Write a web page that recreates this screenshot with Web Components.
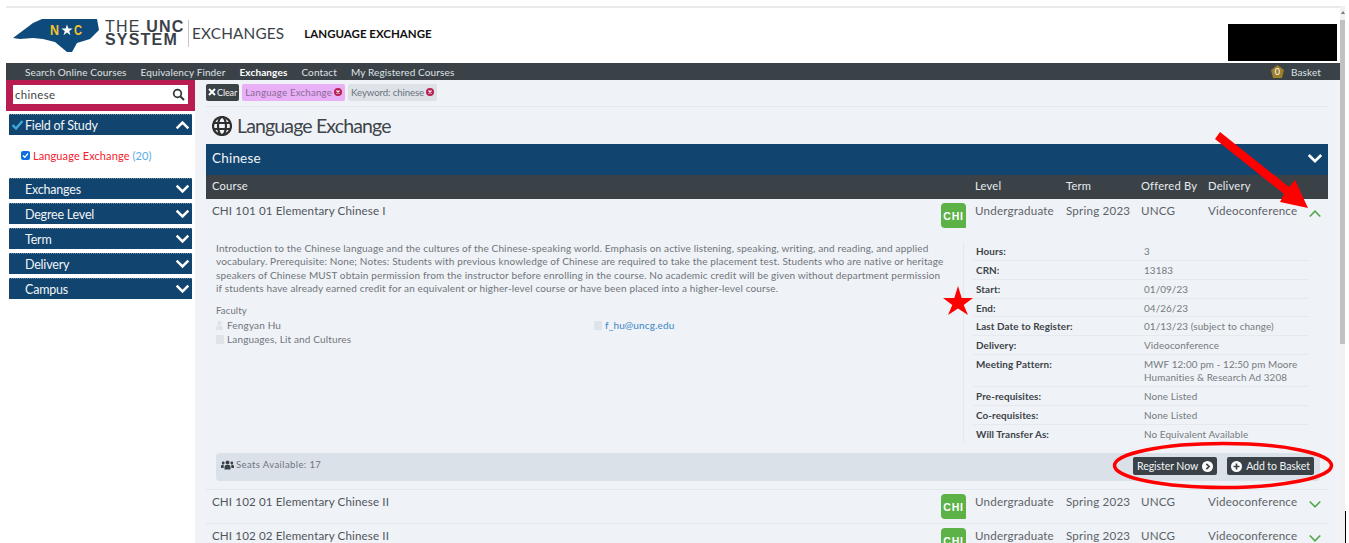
<!DOCTYPE html>
<html lang="en">
<head>
<meta charset="utf-8">
<title>Language Exchange</title>
<style>
  html, body { margin: 0; height: 543px; overflow: hidden; background: #fff; }
  body { font-family: Lato, "Liberation Sans", sans-serif; color: #555; }
</style>
</head>
<body>
<app-shell>
  <app-header></app-header>
  <nav-bar></nav-bar>
  <side-bar slot="side"></side-bar>
  <main-panel slot="main"></main-panel>
</app-shell>
<mark-up></mark-up>

<script>
const chevron = (up, color, w, sw) => `<svg width="${w}" height="${Math.round(w * 0.66)}" viewBox="0 0 18 12" style="display:block"><path d="${up ? 'M2 10 9 3l7 7' : 'M2 2l7 7 7-7'}" fill="none" stroke="${color}" stroke-width="${sw}"/></svg>`;

class AppShell extends HTMLElement {
  constructor() {
    super();
    this.attachShadow({ mode: 'open' });
    this.shadowRoot.innerHTML = `
      <style>
        :host { display: flex; height: 543px; padding-top: 6px; box-sizing: border-box; }
        .page { width: 1334px; margin-left: 6px; border-top: 2px solid #e9e9e9; box-sizing: border-box; display: flex; flex-direction: column; height: 537px; }
        .body { flex: 1; display: flex; min-height: 0; }
        .side { width: 189px; flex: none; }
        .main { flex: 1; min-width: 0; background: #eff2f6; }
        .bar { width: 5px; flex: none; background: #f1f1f1; }
        .arrow { width: 0; height: 0; margin: 5px auto 6px; border: 2px solid transparent; border-top: 0; border-bottom: 3px solid #777; }
        .thumb { height: 324px; background: #c1c1c1; }
      </style>
      <div class="page">
        <slot></slot>
        <div class="body">
          <div class="side"><slot name="side"></slot></div>
          <div class="main"><slot name="main"></slot></div>
        </div>
      </div>
      <div class="bar"><div class="arrow"></div><div class="thumb"></div></div>
    `;
  }
}

class AppHeader extends HTMLElement {
  constructor() {
    super();
    this.attachShadow({ mode: 'open' });
    this.shadowRoot.innerHTML = `
      <style>
        :host { display: flex; align-items: center; height: 55px; padding-bottom: 5px; box-sizing: border-box; position: relative; color: #3a4248; }
        svg.nc { margin: 5px 0 0 7px; flex: none; }
        .sys { margin-left: 5px; width: 83px; height: 27px; border-right: 1px solid #c4c4c4; font: 700 16px/13.500px "Liberation Sans", sans-serif; letter-spacing: 1.200px; white-space: nowrap; }
        .sys span { font-weight: 400; }
        .ex { margin-left: 3px; font: 400 15.300px Lato, sans-serif; letter-spacing: .2px; }
        .lang { margin-left: 20px; font: 700 11.500px Lato, sans-serif; color: #111; }
        .blk { position: absolute; left: 1222px; top: 16px; width: 109px; height: 37px; background: #000; }
      </style>
      <svg class="nc" width="87" height="33" viewBox="0 0 87 33">
        <path d="M0 19 20 4 29 0H84l2 11-9 9-13 4-5 9h-5L42 23 30 20 20 19 7 20z" fill="#0f4a7c"/>
        <text x="37" y="16" font-family="Liberation Sans, sans-serif" font-size="14" font-weight="700" fill="#f2c12e" textLength="9" lengthAdjust="spacingAndGlyphs">N</text>
        <path d="M54 5.500l1.400 4h4.300l-3.500 2.500 1.300 4.200-3.500-2.600-3.500 2.600 1.300-4.200-3.500-2.500h4.300z" fill="#fff"/>
        <text x="61" y="16" font-family="Liberation Sans, sans-serif" font-size="14" font-weight="700" fill="#f2c12e" textLength="8" lengthAdjust="spacingAndGlyphs">C</text>
      </svg>
      <div class="sys"><span>THE</span> UNC<br>SYSTEM</div>
      <div class="ex">EXCHANGES</div>
      <div class="lang">LANGUAGE EXCHANGE</div>
      <div class="blk"></div>
    `;
  }
}

class NavBar extends HTMLElement {
  constructor() {
    super();
    this.attachShadow({ mode: 'open' });
    this.shadowRoot.innerHTML = `
      <style>
        :host { display: flex; align-items: center; height: 17px; background: #3a4248; color: #dfe3e6; font: 400 10px Lato, sans-serif; letter-spacing: .12px; padding-left: 19px; gap: 14px; }
        b { color: #fff; }
        .basket { margin-left: auto; margin-right: 19px; display: flex; align-items: center; gap: 6px; }
      </style>
      <span>Search Online Courses</span><span>Equivalency Finder</span><b>Exchanges</b><span>Contact</span><span>My Registered Courses</span>
      <span class="basket">
        <svg width="15" height="13" viewBox="0 0 15 13"><path d="M1 5l6.500-5 6.500 5-2 8H3z" fill="#9c7f2c"/><text x="7.500" y="10" text-anchor="middle" font-size="9" font-family="Lato, sans-serif" fill="#fff">0</text></svg>
        Basket
      </span>
    `;
  }
}

class SideHead extends HTMLElement {
  constructor() {
    super();
    this.attachShadow({ mode: 'open' });
    const open = this.hasAttribute('open');
    this.shadowRoot.innerHTML = `
      <style>
        :host { display: flex; align-items: center; height: 21px; margin: 0 3px 4px; background: #11446f; color: #f2f5f8; font: 400 12.500px Lato, sans-serif; letter-spacing: -.2px; padding-left: 16px; padding-right: 2px; position: relative; border-top: 1px dotted #6e8ba6; box-sizing: border-box; }
        .chk { position: absolute; left: 2px; top: 3px; }
        .ch { margin-left: auto; }
      </style>
      ${open ? '<svg class="chk" width="13" height="13" viewBox="0 0 13 13"><path d="M1.500 7l3.500 3.500 6.500-7.500" fill="none" stroke="#3fa9d8" stroke-width="2.400"/></svg>' : ''}
      <slot></slot>
      <span class="ch">${chevron(open, '#fff', 15, 3)}</span>
    `;
  }
}

class SideBar extends HTMLElement {
  constructor() {
    super();
    this.attachShadow({ mode: 'open' });
    this.shadowRoot.innerHTML = `
      <style>
        :host { display: block; font-family: Lato, sans-serif; }
        .search { height: 31px; background: #b81c50; padding: 5px 7px 7px; box-sizing: border-box; margin-bottom: 3px; }
        .box { height: 19px; background: #fff; display: flex; align-items: center; justify-content: space-between; padding: 0 3px 0 2px; font: 400 11.500px Lato, sans-serif; color: #444; letter-spacing: .3px; }
        .item { height: 39px; display: flex; align-items: center; padding: 0 0 7px 15px; gap: 3px; font-size: 11px; color: #f4202c; box-sizing: border-box; letter-spacing: .1px; }
        .item i { font-style: normal; color: #5aa9e0; }
        .cb { width: 9px; height: 9px; border-radius: 2px; background: #0f6fe0; display: flex; align-items: center; justify-content: center; }
      </style>
      <div class="search"><div class="box">chinese
        <svg width="13" height="13" viewBox="0 0 13 13"><circle cx="5.500" cy="5.500" r="3.800" fill="none" stroke="#333" stroke-width="1.700"/><path d="M8.500 8.500l3.500 3.500" stroke="#333" stroke-width="2"/></svg>
      </div></div>
      <side-head open>Field of Study</side-head>
      <div class="item"><span class="cb"><svg width="7" height="7" viewBox="0 0 7 7"><path d="M1 3.500l1.800 1.800L6 1.500" fill="none" stroke="#fff" stroke-width="1.300"/></svg></span><span>Language Exchange <i>(20)</i></span></div>
      <side-head>Exchanges</side-head>
      <side-head>Degree Level</side-head>
      <side-head>Term</side-head>
      <side-head>Delivery</side-head>
      <side-head>Campus</side-head>
    `;
  }
}

class FilterChip extends HTMLElement {
  constructor() {
    super();
    this.attachShadow({ mode: 'open' });
    this.shadowRoot.innerHTML = `
      <style>
        :host { display: inline-flex; align-items: center; gap: 2px; height: 17px; padding: 0 3px 1px; box-sizing: border-box; border-radius: 2px; font: 400 9.700px Lato, sans-serif; letter-spacing: var(--chip-ls, .05px); background: var(--chip-bg, #dde2e9); color: var(--chip-fg, #6a727a); white-space: nowrap; }
      </style>
      <slot></slot>
      <svg width="8" height="8" viewBox="0 0 8 8"><circle cx="4" cy="4" r="4" fill="#b8204f"/><path d="M2.500 2.500l3 3m0-3l-3 3" stroke="#fff" stroke-width="1.100"/></svg>
    `;
  }
}

class CourseRow extends HTMLElement {
  constructor() {
    super();
    this.attachShadow({ mode: 'open' });
    const open = this.hasAttribute('open');
    this.shadowRoot.innerHTML = `
      <style>
        :host { display: block; border-top: ${open ? '0' : '1px solid #e4e8ed'}; font: 400 11.600px Lato, sans-serif; letter-spacing: .2px; color: #5d6368; }
        .row { display: grid; grid-template-columns: 729px 34px 91px 75px 67px 100px 1fr; height: ${open ? 38 : 33}px; padding-left: 6px; padding-top: 4px; box-sizing: border-box; }
        .title { padding-top: 1px; color: #50565b; letter-spacing: .13px; }
        .badge { width: 25px; height: 25px; border-radius: 4px 4px 1px 4px; background: #5cb247; color: #fff; font: 700 10.500px "Liberation Sans", sans-serif; letter-spacing: .8px; display: flex; align-items: center; justify-content: center; }
        .c { padding-top: 1px; white-space: nowrap; }
        .ch { padding-top: 6px; }
      </style>
      <div class="row">
        <div class="title"><slot name="title"></slot></div>
        <div><div class="badge">CHI</div></div>
        <div class="c">Undergraduate</div>
        <div class="c">Spring 2023</div>
        <div class="c">UNCG</div>
        <div class="c">Videoconference</div>
        <div class="ch">${chevron(open, '#4fa84a', 14, 2.2)}</div>
      </div>
      <slot></slot>
    `;
  }
}

class DetailLine extends HTMLElement {
  constructor() {
    super();
    this.attachShadow({ mode: 'open' });
    this.shadowRoot.innerHTML = `
      <style>
        :host { display: grid; grid-template-columns: 168px 1fr; padding: 3px 3px 1.850px; box-sizing: border-box; border-bottom: 1px solid #e6e9ee; font: 400 9.900px/13px Lato, sans-serif; letter-spacing: .1px; color: #747a80; }
        :host(:last-child) { border-bottom: 0; }
        .k { color: #3d4348; font-weight: 700; }
      </style>
      <div class="k">${this.getAttribute('label')}</div>
      <div><slot></slot></div>
    `;
  }
}

class CourseDetail extends HTMLElement {
  constructor() {
    super();
    this.attachShadow({ mode: 'open' });
    this.shadowRoot.innerHTML = `
      <style>
        :host { display: block; padding: 5px 8px 8px 10px; font: 400 10px/13.300px Lato, sans-serif; letter-spacing: .15px; color: #6f757b; }
        .cols { display: grid; grid-template-columns: 747px 1fr; }
        .txt { padding-right: 17px; }
        p { margin: 0 0 9px; }
        .fac { font-size: 9.500px; margin-bottom: 2px; }
        .people { display: grid; grid-template-columns: 378px 1fr; }
        .ico { display: inline-block; vertical-align: -1px; margin-right: 4px; }
        .ico.w { width: 8px; height: 9px; background: #dfe4ea; margin-right: 3px; }
        a { color: #3a86c8; text-decoration: none; }
        .tbl { border-left: 1px solid #e4e8ed; padding-left: 9px; padding-right: 11px; height: 201px; box-sizing: border-box; }
        .seats { display: flex; align-items: center; justify-content: space-between; margin-top: 10px; height: 28px; background: #dbe1e8; border-radius: 4px; padding: 0 6px 2px 5px; box-sizing: border-box; font-size: 9.500px; letter-spacing: .4px; }
        .seats .l { display: flex; align-items: center; gap: 2px; padding-bottom: 2px; }
        .btns { display: flex; gap: 10px; }
      </style>
      <div class="cols">
        <div class="txt">
          <p>Introduction to the Chinese language and the cultures of the Chinese-speaking world. Emphasis on active listening, speaking, writing, and reading, and applied vocabulary. Prerequisite: None; Notes: Students with previous knowledge of Chinese are required to take the placement test. Students who are native or heritage speakers of Chinese MUST obtain permission from the instructor before enrolling in the course. No academic credit will be given without department permission if students have already earned credit for an equivalent or higher-level course or have been placed into a higher-level course.</p>
          <div class="fac">Faculty</div>
          <div class="people">
            <div><svg class="ico" width="7" height="9" viewBox="0 0 7 9"><circle cx="3.500" cy="2.200" r="2.200" fill="#dfe4ea"/><path d="M0 9V7c0-1.500 1.200-2.400 3.500-2.400S7 5.500 7 7v2z" fill="#dfe4ea"/></svg>Fengyan Hu</div>
            <div><span class="ico w"></span><a>f_hu@uncg.edu</a></div>
          </div>
          <div><span class="ico w"></span>Languages, Lit and Cultures</div>
        </div>
        <div class="tbl">
          <detail-line label="Hours:">3</detail-line>
          <detail-line label="CRN:">13183</detail-line>
          <detail-line label="Start:">01/09/23</detail-line>
          <detail-line label="End:">04/26/23</detail-line>
          <detail-line label="Last Date to Register:">01/13/23 (subject to change)</detail-line>
          <detail-line label="Delivery:">Videoconference</detail-line>
          <detail-line label="Meeting Pattern:">MWF 12:00 pm - 12:50 pm Moore Humanities &amp; Research Ad 3208</detail-line>
          <detail-line label="Pre-requisites:">None Listed</detail-line>
          <detail-line label="Co-requisites:">None Listed</detail-line>
          <detail-line label="Will Transfer As:">No Equivalent Available</detail-line>
        </div>
      </div>
      <div class="seats">
        <span class="l"><svg width="13" height="10" viewBox="0 0 13 10"><g fill="#3a4248"><circle cx="6.500" cy="2.500" r="2"/><path d="M3.500 9.500V7c0-1.500 1-2.200 3-2.200s3 .7 3 2.200v2.500z"/><circle cx="2.200" cy="3" r="1.400"/><circle cx="10.800" cy="3" r="1.400"/><path d="M0 8V6.200C0 5.300.8 4.800 2.700 4.800v3.200zM13 8V6.200c0-.9-.8-1.400-2.700-1.400v3.200z"/></g></svg>Seats Available: 17</span>
        <span class="btns">
          <act-button>Register Now <svg slot="after" width="11" height="11" viewBox="0 0 11 11"><circle cx="5.500" cy="5.500" r="5.500" fill="#fff"/><path d="M4.300 2.800l2.800 2.700-2.800 2.700" fill="none" stroke="#3a4248" stroke-width="1.700"/></svg></act-button>
          <act-button><svg slot="before" width="11" height="11" viewBox="0 0 11 11"><circle cx="5.500" cy="5.500" r="5.500" fill="#fff"/><path d="M5.500 2.500v6m-3-3h6" stroke="#3a4248" stroke-width="1.700"/></svg>Add to Basket</act-button>
        </span>
      </div>
    `;
  }
}

class ActButton extends HTMLElement {
  constructor() {
    super();
    this.attachShadow({ mode: 'open' });
    this.shadowRoot.innerHTML = `
      <style>
        :host { display: inline-flex; align-items: center; gap: 4px; height: 18px; padding: 0 4px; border-radius: 2px; background: #3a4248; color: #f2f4f6; font: 400 10.500px Lato, sans-serif; letter-spacing: -.06px; white-space: nowrap; }
      </style>
      <slot name="before"></slot><slot></slot><slot name="after"></slot>
    `;
  }
}

class MainPanel extends HTMLElement {
  constructor() {
    super();
    this.attachShadow({ mode: 'open' });
    this.shadowRoot.innerHTML = `
      <style>
        :host { display: block; padding: 4px 12px 0 11px; height: 100%; box-sizing: border-box; overflow: hidden; font-family: Lato, sans-serif; }
        .chips { display: flex; gap: 3px; height: 22px; border-bottom: 1px solid #e4e8ed; align-items: flex-start; }
        .clear { display: inline-flex; align-items: center; gap: 1px; height: 17px; padding: 0 2px 1px; box-sizing: border-box; border-radius: 2px; background: #3a4248; color: #f2f4f6; font: 400 9px Lato, sans-serif; letter-spacing: -.1px; }
        filter-chip.pink { --chip-bg: #e9b0f7; --chip-fg: #8a6a96; --chip-ls: .2px; }
        filter-chip.kw { --chip-ls: -.12px; }
        h1 { display: flex; align-items: center; gap: 5px; margin: 0; height: 37px; padding-left: 6px; font: 400 19.500px Lato, sans-serif; letter-spacing: -.85px; color: #3f454b; }
        .group { height: 31px; padding: 0 5px 3px 6px; box-sizing: border-box; background: #11446f; color: #f2f5f8; font: 400 13.500px Lato, sans-serif; letter-spacing: .2px; display: flex; align-items: center; justify-content: space-between; }
        .cols { display: grid; grid-template-columns: 763px 91px 75px 67px 1fr; height: 24px; padding: 0 0 3px 6px; box-sizing: border-box; align-items: center; background: #3a4248; color: #e8ebee; font: 400 11.200px Lato, sans-serif; letter-spacing: .2px; }
      </style>
      <div class="chips">
        <span class="clear"><svg width="8" height="8" viewBox="0 0 8 8"><path d="M1 1l6 6m0-6L1 7" stroke="#fff" stroke-width="2"/></svg>Clear</span>
        <filter-chip class="pink">Language Exchange</filter-chip>
        <filter-chip class="kw">Keyword: chinese</filter-chip>
      </div>
      <h1>
        <svg width="20" height="20" viewBox="0 0 20 20"><circle cx="10" cy="10" r="9" fill="none" stroke="#2f2f2f" stroke-width="2.200"/><ellipse cx="10" cy="10" rx="4" ry="9" fill="none" stroke="#2f2f2f" stroke-width="2.200"/><path d="M1.500 7h17M1.500 13h17" stroke="#2f2f2f" stroke-width="2.200"/></svg>
        Language Exchange
      </h1>
      <div class="group">Chinese ${chevron(false, '#fff', 16, 3)}</div>
      <div class="cols"><span>Course</span><span>Level</span><span>Term</span><span>Offered By</span><span>Delivery</span></div>
      <course-row open><span slot="title">CHI 101 01 Elementary Chinese I</span><course-detail></course-detail></course-row>
      <course-row><span slot="title">CHI 102 01 Elementary Chinese II</span></course-row>
      <course-row><span slot="title">CHI 102 02 Elementary Chinese II</span></course-row>
    `;
  }
}

// hand-drawn annotations sitting over the screenshot
class MarkUp extends HTMLElement {
  constructor() {
    super();
    this.attachShadow({ mode: 'open' });
    this.shadowRoot.innerHTML = `
      <style>
        :host { position: absolute; left: 0; top: 0; width: 1349px; height: 543px; pointer-events: none; display: block; }
        svg { display: block; }
      </style>
      <svg width="1349" height="543" viewBox="0 0 1349 543">
        <path d="M1215 139l5-7 69 55 6-7 13 28-28-6 4-8z" fill="#fe0000"/>
        <ellipse cx="1223" cy="465.500" rx="108.500" ry="22" fill="none" stroke="#fe0000" stroke-width="3.500"/>
        <path d="M958 286l3.700 12H973l-9.300 7 4.300 10-10-6.500-10 6.500 4.300-10-9.300-7h11.300z" fill="#fe0000"/>
        <rect x="1345" y="511" width="1" height="32" fill="#000"/>
      </svg>
    `;
  }
}

customElements.define('app-shell', AppShell);
customElements.define('app-header', AppHeader);
customElements.define('nav-bar', NavBar);
customElements.define('side-head', SideHead);
customElements.define('side-bar', SideBar);
customElements.define('filter-chip', FilterChip);
customElements.define('act-button', ActButton);
customElements.define('detail-line', DetailLine);
customElements.define('course-detail', CourseDetail);
customElements.define('course-row', CourseRow);
customElements.define('main-panel', MainPanel);
customElements.define('mark-up', MarkUp);
</script>
</body>
</html>
